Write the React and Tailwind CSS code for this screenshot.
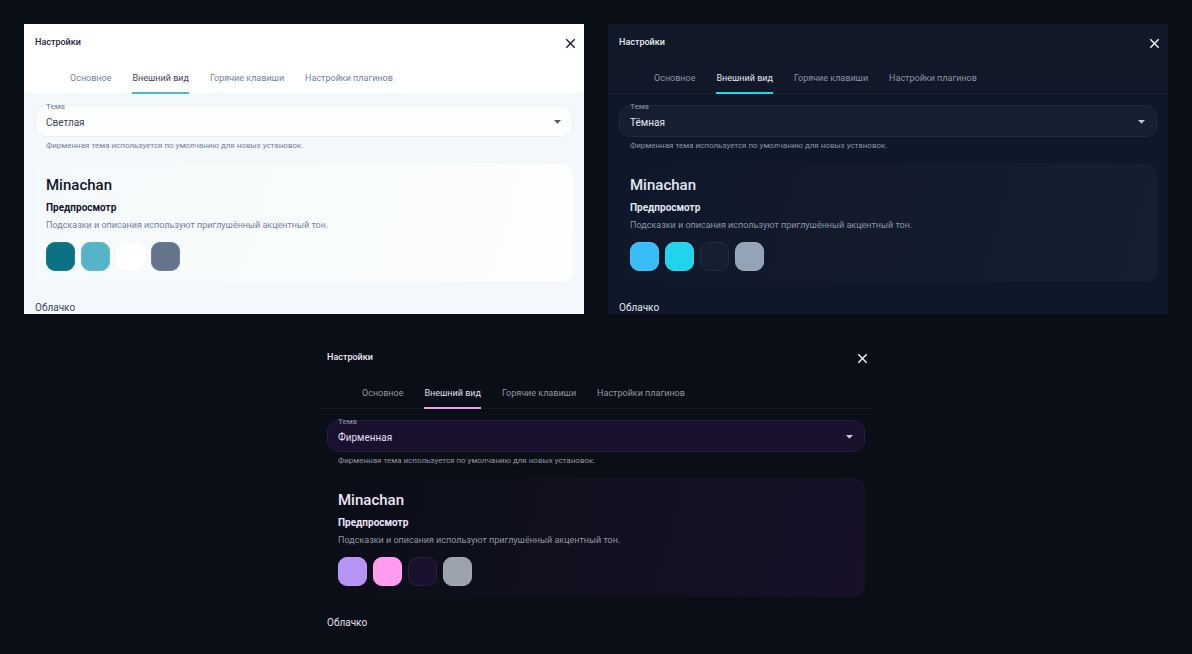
import React, { useId, useState } from 'react';
import clsx from 'clsx';

const TABS = ['Основное', 'Внешний вид', 'Горячие клавиши', 'Настройки плагинов'];

const THEME_NAMES = { light: 'Светлая', dark: 'Тёмная', brand: 'Фирменная' };

// Class names for every themed part of the settings window
const THEMES = {
  light: {
    panel: 'bg-[#f3f8fb]',
    header: 'bg-white',
    divider: 'border-[#f1f5f8]',
    title: 'text-[#1e2438]',
    heading: 'text-[#11162b]',
    text: 'text-[#3f4658]',
    muted: 'text-[#74829b]',
    underline: 'border-[#56b4c8]',
    field: 'bg-[#fcfefd] border-[#ecf1f4]',
    arrow: 'text-[#555a60]',
    card: 'from-[#f4f9fb] to-[#fdfefd]',
    swatches: [
      'bg-[#0b7285] border-[#1a7b8d]',
      'bg-[#56b4c8] border-[#63bacc]',
      'bg-white border-[#fbfdfd]',
      'bg-[#64748b] border-[#708097]',
    ],
  },
  dark: {
    panel: 'bg-[#0f172a]',
    header: 'bg-[#111827]',
    divider: 'border-[#182030]',
    title: 'text-[#e8edf4]',
    heading: 'text-[#e2e8f0]',
    text: 'text-[#e2e8f0]',
    muted: 'text-[#8b96a9]',
    underline: 'border-[#22d3ee]',
    field: 'bg-[#161f30] border-[#202a3b]',
    arrow: 'text-[#c3c7ce]',
    card: 'from-[#0f172a] to-[#161f2f]',
    swatches: [
      'bg-[#38bdf8] border-[#4ac2f7]',
      'bg-[#22d3ee] border-[#36d6ef]',
      'bg-[#161f30] border-[#242c3d]',
      'bg-[#94a3b8] border-[#9caabd]',
    ],
  },
  brand: {
    panel: 'bg-[#0a0e17]',
    header: 'bg-[#0a0e17]',
    divider: 'border-[#13141f]',
    title: 'text-[#f0e9fb]',
    heading: 'text-[#ede4fa]',
    text: 'text-[#e6ddf3]',
    muted: 'text-[#9296a1]',
    underline: 'border-[#f49cf0]',
    field: 'bg-[#1a112e] border-[#271d3a]',
    arrow: 'text-[#cfcbd6]',
    card: 'from-[#0a0e17] to-[#181128]',
    swatches: [
      'bg-[#b794f4] border-[#bd9df4]',
      'bg-[#ff9cf0] border-[#ffa5f1]',
      'bg-[#1a112e] border-[#272036]',
      'bg-[#9ca3af] border-[#a4aab5]',
    ],
  },
};

function SettingsTabs({ theme }) {
  const [active, setActive] = useState('Внешний вид');

  return (
    <div role="tablist" className={clsx('flex h-8 gap-[21px] border-b pl-[46px]', theme.divider)}>
      {TABS.map((tab) => (
        <button
          key={tab}
          type="button"
          role="tab"
          aria-selected={tab === active}
          onClick={() => setActive(tab)}
          className={clsx(
            '-mb-px border-b-2 pt-[3px] text-[9px] whitespace-nowrap',
            tab === active ? [theme.text, theme.underline] : [theme.muted, 'border-transparent']
          )}
        >
          {tab}
        </button>
      ))}
    </div>
  );
}

function ThemeSelect({ name, theme }) {
  const id = useId();

  return (
    <div>
      <div className="relative">
        <select
          id={id}
          defaultValue={name}
          className={clsx(
            'block h-8 w-full appearance-none rounded-[11px] border pt-[3px] pr-8 pl-[10px] text-[10px] outline-none',
            theme.field,
            theme.text
          )}
        >
          {Object.entries(THEME_NAMES).map(([value, label]) => (
            <option key={value} value={value}>
              {label}
            </option>
          ))}
        </select>
        {/* Floating label sits on the top border */}
        <label
          htmlFor={id}
          className={clsx('absolute -top-1 left-[11px] text-[8px] leading-[12px]', theme.muted)}
        >
          Тема
        </label>
        <svg
          viewBox="0 0 7 4"
          className={clsx('pointer-events-none absolute top-[15px] right-3 h-1 w-[7px]', theme.arrow)}
          aria-hidden="true"
        >
          <path d="M0 0h7L3.5 3.7z" fill="currentColor" />
        </svg>
      </div>
      <p className={clsx('px-[11px] pt-1 text-[8px] leading-[10px]', theme.muted)}>
        Фирменная тема используется по умолчанию для новых установок.
      </p>
    </div>
  );
}

function PreviewCard({ theme }) {
  return (
    <div className={clsx('rounded-[11px] bg-linear-105 px-[11px] pt-3 pb-[11px]', theme.card)}>
      <h2 className={clsx('text-[15px] leading-5 font-medium', theme.heading)}>Minachan</h2>
      <h3 className={clsx('pt-[6px] text-[10px] leading-[14px] font-bold', theme.heading)}>
        Предпросмотр
      </h3>
      <p className={clsx('pt-1 text-[9px] leading-3', theme.muted)}>
        Подсказки и описания используют приглушённый акцентный тон.
      </p>
      <div className="flex gap-[6px] pt-[11px]">
        {theme.swatches.map((color) => (
          <span key={color} className={clsx('size-[29px] rounded-[9px] border', color)} />
        ))}
      </div>
    </div>
  );
}

function SettingsWindow({ name, className }) {
  const theme = THEMES[name];

  return (
    <section className={clsx('overflow-hidden', theme.panel, className)}>
      <header className={theme.header}>
        <div className="flex h-[38px] items-center justify-between pr-2 pl-[11px]">
          <h1 className={clsx('text-[9px] font-medium', theme.title)}>Настройки</h1>
          <button type="button" aria-label="Закрыть" className={theme.title}>
            <svg viewBox="0 0 11 11" className="size-[11px]" aria-hidden="true">
              <path d="M1.3 1.3l8.4 8.4M9.7 1.3L1.3 9.7" stroke="currentColor" strokeWidth="1.5" />
            </svg>
          </button>
        </div>
        <SettingsTabs theme={theme} />
      </header>

      <div className="px-[11px] pt-[11px]">
        <ThemeSelect name={name} theme={theme} />
        <div className="pt-3">
          <PreviewCard theme={theme} />
        </div>
        <h2 className={clsx('pt-5 text-[10px] leading-3', theme.text)}>Облачко</h2>
      </div>
    </section>
  );
}

export default function App() {
  return (
    <main className="grid min-h-screen grid-cols-4 content-start gap-x-6 gap-y-[25px] bg-[#0a0e17] p-6 font-['Roboto','Noto_Sans',sans-serif]">
      <SettingsWindow name="light" className="col-span-2" />
      <SettingsWindow name="dark" className="col-span-2" />
      <SettingsWindow name="brand" className="col-span-2 col-start-2" />
    </main>
  );
}
